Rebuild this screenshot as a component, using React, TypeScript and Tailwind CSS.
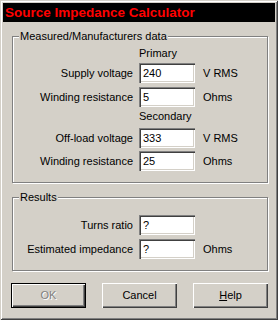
import React from "react";

const Field = ({ value }: { value: string }) => (
  <div className="w-[56px] h-[20px] bg-white shadow-[inset_1px_1px_0_#808080,inset_2px_2px_0_#404040,inset_-1px_-1px_0_#ffffff,inset_-2px_-2px_0_#d4d0c8] pl-[4px] flex items-center text-[11px] text-black">
    {value}
  </div>
);

const Row = ({ label, value, unit, className = "" }: { label: string; value: string; unit?: string; className?: string }) => (
  <div className={`flex items-center h-[20px] ${className}`}>
    <div className="w-[121px] text-right pr-[1px] text-[11px] text-black">{label}</div>
    <div className="ml-[5px]">
      <Field value={value} />
    </div>
    {unit && <div className="ml-[8px] text-[11px] text-black">{unit}</div>}
  </div>
);

const Group = ({ title, className, children }: { title: string; className: string; children: React.ReactNode }) => (
  <div className={`relative ml-[9px] w-[256px] border border-[#808080] shadow-[inset_1px_1px_0_#ffffff,1px_1px_0_#ffffff] ${className}`}>
    <span className="absolute left-[6px] top-[-7px] px-[1px] bg-[#d4d0c8] text-[11px] leading-[13px] text-black">{title}</span>
    {children}
  </div>
);

const Button = ({ children, isDefault, className = "" }: { children: React.ReactNode; isDefault?: boolean; className?: string }) => (
  <div
    className={`w-[75px] h-[25px] flex items-center justify-center text-[11px] ${
      isDefault
        ? "border border-black shadow-[inset_1px_1px_0_#ffffff,inset_-1px_-1px_0_#404040,inset_-2px_-2px_0_#808080]"
        : "shadow-[inset_1px_1px_0_#ffffff,inset_-1px_-1px_0_#404040,inset_-2px_-2px_0_#808080]"
    } ${className}`}
  >
    {children}
  </div>
);

export default function App() {
  return (
    <div className="w-[278px] h-[320px] bg-[#d4d0c8] p-[3px] flex flex-col font-['Liberation_Sans',Arial,sans-serif] shadow-[inset_1px_1px_0_#d4d0c8,inset_-1px_-1px_0_#404040,inset_2px_2px_0_#ffffff,inset_-2px_-2px_0_#808080]">
      <div className="h-[19px] bg-black text-[#ff0000] font-bold text-[13.5px] pl-[2px] flex items-center leading-none">
        Source Impedance Calculator
      </div>

      <Group title="Measured/Manufacturers data" className="mt-[14px] h-[147px]">
        <div className="flex flex-col pt-[10px]">
          <div className="h-[13px] leading-[13px] text-[11px] text-black pl-[126px]">Primary</div>
          <Row label="Supply voltage" value="240" unit="V RMS" className="mt-[3px]" />
          <Row label="Winding resistance" value="5" unit="Ohms" className="mt-[4px]" />
          <div className="h-[13px] leading-[13px] text-[11px] text-black pl-[126px] mt-[3px]">Secondary</div>
          <Row label="Off-load voltage" value="333" unit="V RMS" className="mt-[5px]" />
          <Row label="Winding resistance" value="25" unit="Ohms" className="mt-[3px]" />
        </div>
      </Group>

      <Group title="Results" className="mt-[14px] h-[74px]">
        <div className="flex flex-col pt-[17px]">
          <Row label="Turns ratio" value="?" />
          <Row label="Estimated impedance" value="?" unit="Ohms" className="mt-[4px]" />
        </div>
      </Group>

      <div className="flex ml-[8px] mt-[12px] gap-[16px]">
        <Button isDefault>
          <span className="text-[#808080] [text-shadow:1px_1px_0_#ffffff]">OK</span>
        </Button>
        <Button>
          <span className="text-black">Cancel</span>
        </Button>
        <Button>
          <span className="text-black">
            <span className="underline">H</span>elp
          </span>
        </Button>
      </div>
    </div>
  );
}
